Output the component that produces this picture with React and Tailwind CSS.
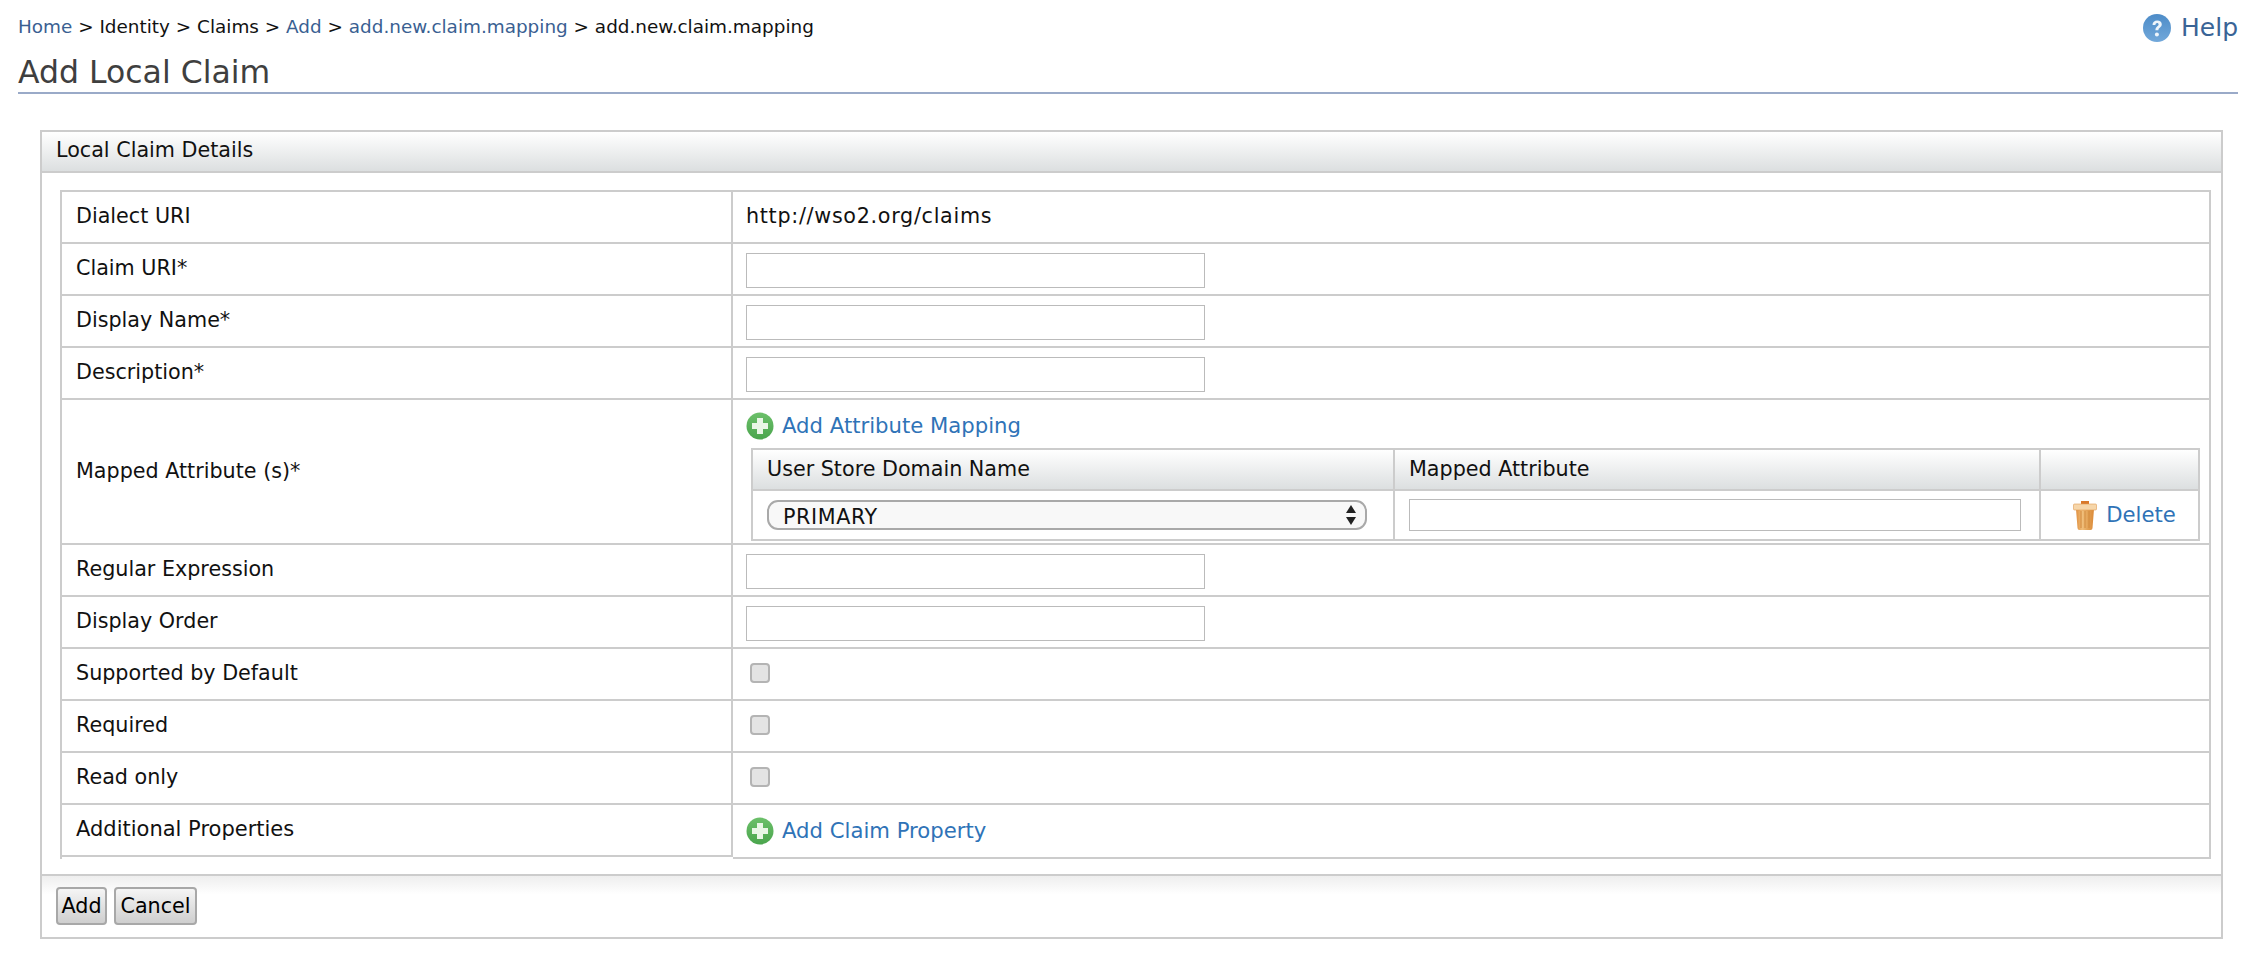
const rowCls = "flex h-[52px] border-b-2 border-[#cccccc]";
const labelCls = "w-[671px] shrink-0 border-r-2 border-[#cccccc] pl-[14px] flex items-center text-[#111]";
const valueCls = "flex-1 pl-[13px] flex items-center";
const inputCls = "w-[459px] h-[35px] mt-[3px] border border-[#bbbbbb] bg-white outline-none";
const inputCls2 = "w-[459px] h-[35px] mt-[2px] border border-[#bbbbbb] bg-white outline-none";

function Plus() {
  return (
    <svg width="28" height="28" viewBox="0 0 28 28" className="shrink-0">
      <defs>
        <linearGradient id="gp" x1="0" y1="0" x2="0" y2="1">
          <stop offset="0" stopColor="#6cc06a" />
          <stop offset="1" stopColor="#4aa54d" />
        </linearGradient>
      </defs>
      <circle cx="14" cy="14" r="13.5" fill="url(#gp)" />
      <path d="M11 6h6v5h5v6h-5v5h-6v-5H6v-6h5z" fill="#e9f6e6" />
    </svg>
  );
}

function Help() {
  return (
    <svg width="28" height="28" viewBox="0 0 28 28" className="shrink-0">
      <defs>
        <linearGradient id="gh" x1="0" y1="0" x2="0" y2="1">
          <stop offset="0" stopColor="#4d8cc8" />
          <stop offset="1" stopColor="#72a8da" />
        </linearGradient>
      </defs>
      <circle cx="14" cy="14" r="14" fill="url(#gh)" />
      <path d="M9.5 11c0-3 2-4.6 4.7-4.6 2.8 0 4.6 1.6 4.6 3.8 0 3.2-3.4 3.3-3.4 6h-3c0-3.8 3.2-4 3.2-5.8 0-.8-.6-1.4-1.5-1.4-1 0-1.6.7-1.7 2z" fill="#eef5fb" />
      <circle cx="13.9" cy="20.5" r="2" fill="#eef5fb" />
    </svg>
  );
}

function Trash() {
  return (
    <svg width="24" height="29" viewBox="0 0 24 29" className="shrink-0">
      <defs>
        <linearGradient id="gt" x1="0" y1="0" x2="1" y2="0">
          <stop offset="0" stopColor="#e08f3e" />
          <stop offset="0.35" stopColor="#f0bf7c" />
          <stop offset="0.65" stopColor="#e3a356" />
          <stop offset="1" stopColor="#dc8a38" />
        </linearGradient>
      </defs>
      <rect x="8" y="0" width="8" height="4" fill="#d9782a" />
      <path d="M3 8h18l-1.5 19a2 2 0 0 1-2 2h-11a2 2 0 0 1-2-2z" fill="url(#gt)" />
      <path d="M8 10v17M12 10v17M16 10v17" stroke="#d08a3e" strokeWidth="1" />
      <rect x="0.5" y="3" width="23" height="6" rx="1" fill="#f6d6aa" stroke="#e09a50" strokeWidth="0.6" />
    </svg>
  );
}

function Check() {
  return <div className="ml-[4px] mb-[3px] w-[20px] h-[20px] rounded-[4px] border-2 border-[#b4b4b4] bg-[#e4e4e4]" />;
}

function Row({ label, children }) {
  return (
    <div className={rowCls}>
      <div className={labelCls}>{label}</div>
      <div className={valueCls}>{children}</div>
    </div>
  );
}

export default function App() {
  return (
    <div className="h-[966px] bg-white overflow-hidden text-[20.7px] text-[#111]" style={{ fontFamily: '"DejaVu Sans", sans-serif' }}>
      <div className="flex justify-between pl-[18px] pr-[16px] pt-[14px] h-[54px]">
        <div className="text-[18.4px] leading-[26px] whitespace-pre text-[#111]">
          <a className="text-[#3a5f92]">Home</a> {">"} Identity {">"} Claims {">"} <a className="text-[#3a5f92]">Add</a> {">"} <a className="text-[#3a5f92]">add.new.claim.mapping</a> {">"} add.new.claim.mapping
        </div>
        <div className="flex items-center gap-[10px] h-[28px] text-[25px] text-[#3a6496]">
          <Help />
          <span>Help</span>
        </div>
      </div>
      <div className="ml-[18px] mr-[16px] h-[40px] border-b-2 border-[#9aaac8] text-[31.5px] leading-[36px] text-[#3f3f3f]">Add Local Claim</div>
      <div className="ml-[40px] mr-[31px] mt-[36px] h-[809px] border-2 border-[#cccccc] flex flex-col">
        <div className="h-[41px] shrink-0 border-b-2 border-[#cccccc] bg-gradient-to-b from-[#ffffff] to-[#dcdfe0] pl-[14px] pb-[2px] flex items-center">Local Claim Details</div>
        <div className="flex-1 pl-[18px] pr-[10px] pt-[17px]">
          <div className="border-2 border-b-0 border-[#cccccc]">
            <Row label="Dialect URI"><span className="tracking-[0.7px]">http://wso2.org/claims</span></Row>
            <Row label="Claim URI*"><input className={inputCls} /></Row>
            <Row label="Display Name*"><input className={inputCls} /></Row>
            <Row label="Description*"><input className={inputCls} /></Row>
            <div className="flex h-[145px] border-b-2 border-[#cccccc]">
              <div className={labelCls}>Mapped Attribute (s)*</div>
              <div className="flex-1 flex flex-col pl-[13px] pr-[9px]">
                <div className="flex items-center gap-[8px] h-[48px] pt-[3px] text-[21.2px] text-[#2f73b7] shrink-0">
                  <Plus />
                  <span>Add Attribute Mapping</span>
                </div>
                <div className="ml-[5px] border-2 border-[#cccccc] h-[93px] flex flex-col">
                  <div className="flex h-[41px] border-b-2 border-[#cccccc] bg-gradient-to-b from-[#ffffff] to-[#dcdfe0] shrink-0">
                    <div className="w-[642px] border-r-2 border-[#cccccc] pl-[14px] flex items-center">User Store Domain Name</div>
                    <div className="w-[646px] border-r-2 border-[#cccccc] pl-[14px] flex items-center">Mapped Attribute</div>
                    <div className="flex-1" />
                  </div>
                  <div className="flex flex-1">
                    <div className="w-[642px] border-r-2 border-[#cccccc] pl-[14px] flex items-center">
                      <div className="relative w-[600px] h-[30px]">
                        <select className="appearance-none w-full h-full rounded-[11px] border-2 border-[#a9a9a9] bg-[#f8f8f8] pl-[14px] pb-[1px] text-[20.7px] tracking-[0.6px] text-[#111] outline-none">
                          <option>PRIMARY</option>
                        </select>
                        <svg width="12" height="20" viewBox="0 0 12 20" className="absolute right-[10px] top-[5px]">
                          <path d="M6 0l5 8H1zM6 20l5-8H1z" fill="#222" />
                        </svg>
                      </div>
                    </div>
                    <div className="w-[646px] border-r-2 border-[#cccccc] pl-[14px] flex items-center">
                      <input className="w-[612px] h-[32px] border border-[#bbbbbb] bg-white outline-none" />
                    </div>
                    <div className="flex-1 flex items-center justify-center gap-[9px] pl-[10px] text-[21.2px] text-[#2f73b7]">
                      <Trash />
                      <span>Delete</span>
                    </div>
                  </div>
                </div>
              </div>
            </div>
            <Row label="Regular Expression"><input className={inputCls2} /></Row>
            <Row label="Display Order"><input className={inputCls2} /></Row>
            <Row label="Supported by Default"><Check /></Row>
            <Row label="Required"><Check /></Row>
            <Row label="Read only"><Check /></Row>
            <div className="flex h-[54px]">
              <div className={labelCls + " border-b-2 h-[52px] text-[21px]"}>Additional Properties</div>
              <div className="flex-1 border-b-2 border-[#cccccc] pl-[13px] flex items-center gap-[8px] text-[21.2px] text-[#2f73b7]">
                <Plus />
                <span>Add Claim Property</span>
              </div>
            </div>
          </div>
        </div>
        <div className="h-[63px] shrink-0 border-t-2 border-[#cccccc] bg-gradient-to-b from-[#eeeeee] via-[#ffffff] via-30% to-[#ffffff] pl-[14px] pt-[11px] flex items-start gap-[7px]">
          <button className="h-[38px] w-[51px] pt-[2px] rounded-[4px] border-2 border-[#a8a8a8] bg-gradient-to-b from-[#f5f5f5] to-[#cfcfcf] text-[20.7px] text-black">Add</button>
          <button className="h-[38px] w-[83px] pt-[2px] rounded-[4px] border-2 border-[#a8a8a8] bg-gradient-to-b from-[#f5f5f5] to-[#cfcfcf] text-[20.7px] text-black">Cancel</button>
        </div>
      </div>
    </div>
  );
}
